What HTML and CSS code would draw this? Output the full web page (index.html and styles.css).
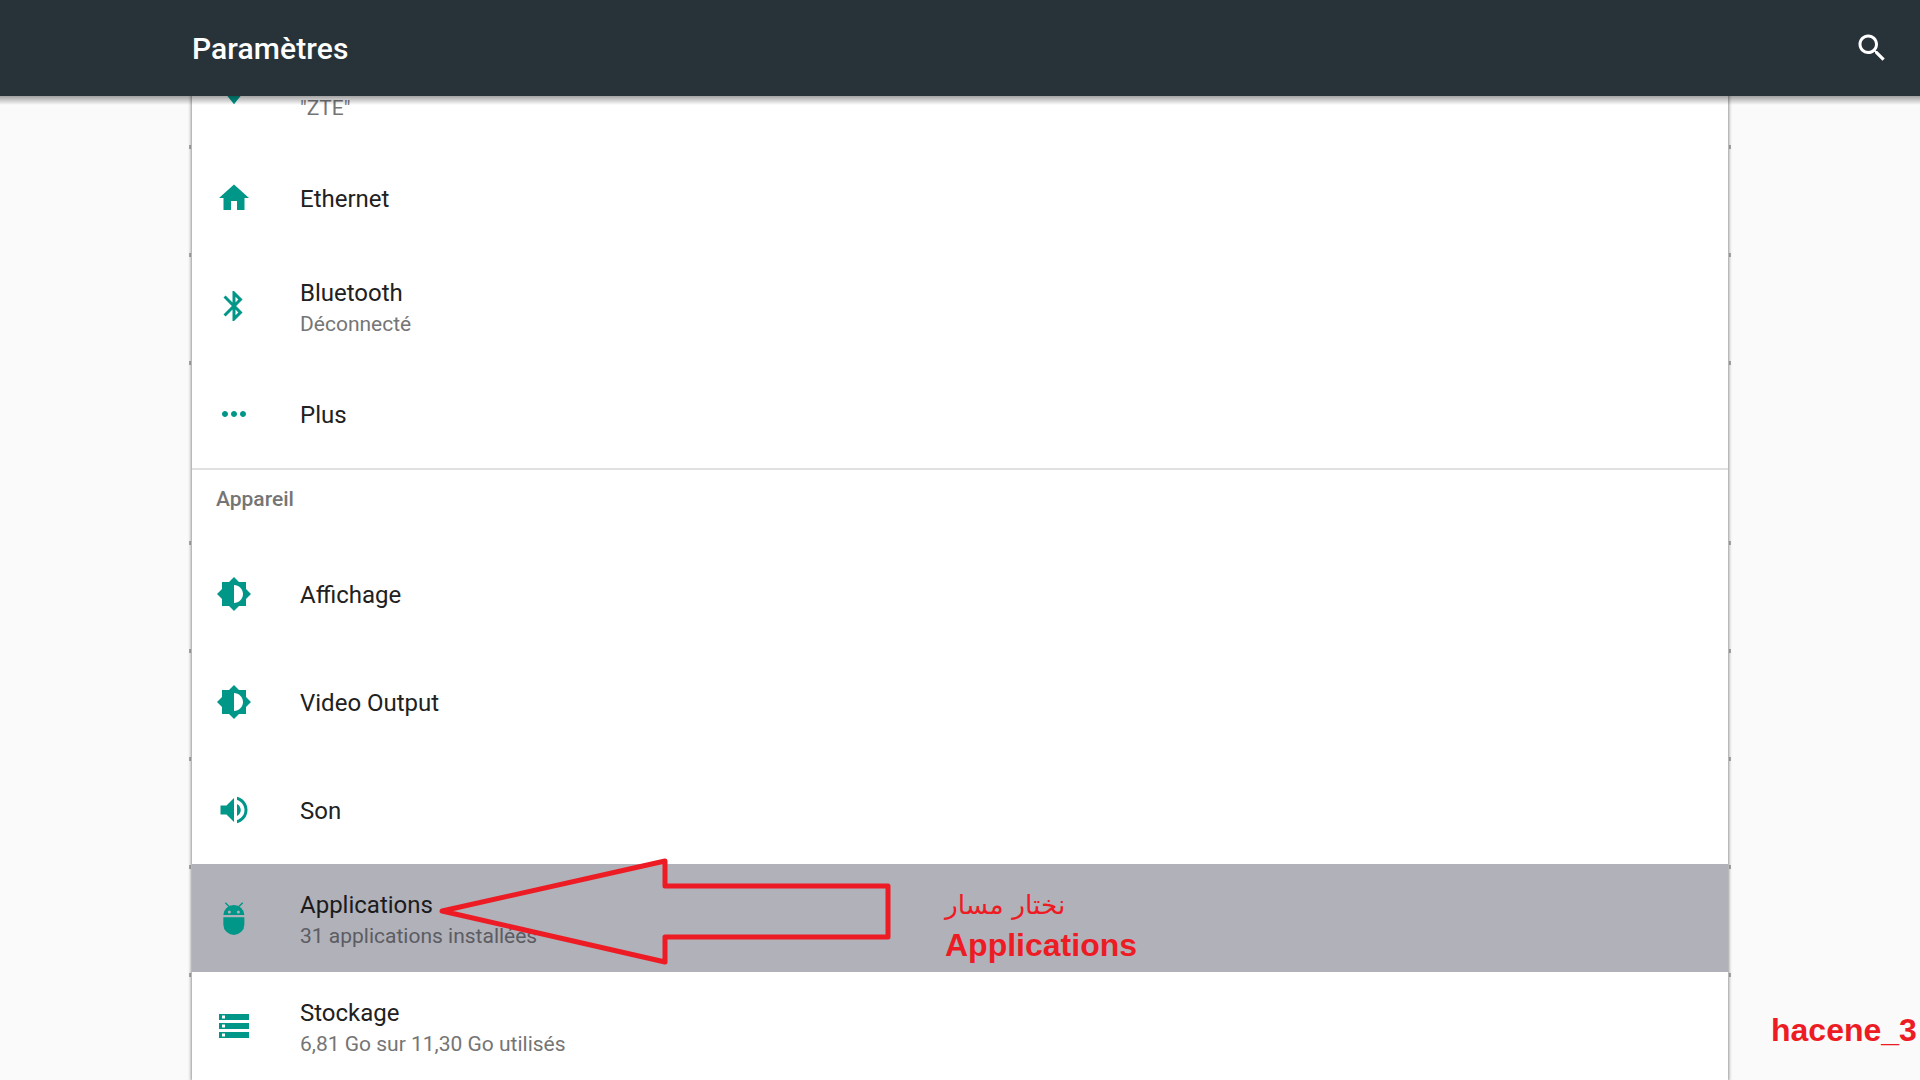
FILE: index.html
```html
<!DOCTYPE html>
<html lang="fr">
<head>
<meta charset="utf-8">
<title>Paramètres</title>
<link rel="stylesheet" href="styles.css">
</head>
<body>
<header class="appbar">
  <h1 class="appbar-title">Paramètres</h1>
  <svg class="search-icon" viewBox="0 0 24 24"><path d="M15.5 14h-.79l-.28-.27C15.41 12.59 16 11.11 16 9.5 16 5.91 13.09 3 9.5 3S3 5.91 3 9.5 5.91 16 9.5 16c1.61 0 3.09-.59 4.23-1.57l.27.28v.79l5 4.99L20.49 19l-4.99-5zm-6 0C7.01 14 5 11.99 5 9.5S7.01 5 9.5 5 14 7.01 14 9.5 11.99 14 9.5 14z"/></svg>
</header>
<main class="panel">
  <div class="row">
    <svg class="icon" viewBox="0 0 24 24"><path d="M12.01 21.49L23.64 7c-.45-.34-4.93-4-11.64-4C5.28 3 .81 6.66.36 7l11.64 14.49z"/></svg>
    <div class="text"><div class="title">Wi-Fi</div><div class="summary">"ZTE"</div></div>
  </div>
  <div class="row">
    <svg class="icon" viewBox="0 0 24 24"><path d="M10 20v-6h4v6h5v-8h3L12 3 2 12h3v8z"/></svg>
    <div class="text"><div class="title">Ethernet</div></div>
  </div>
  <div class="row">
    <svg class="icon" viewBox="0 0 24 24"><path d="M17.71 7.71L12 2h-1v7.59L6.41 5 5 6.41 10.59 12 5 17.59 6.41 19 11 14.41V22h1l5.71-5.71-4.3-4.29 4.3-4.29zM13 5.83l1.88 1.88L13 9.59V5.83zm1.88 10.46L13 18.17v-3.76l1.88 1.88z"/></svg>
    <div class="text"><div class="title">Bluetooth</div><div class="summary">Déconnecté</div></div>
  </div>
  <div class="row">
    <svg class="icon" viewBox="0 0 24 24"><path d="M6 10c-1.1 0-2 .9-2 2s.9 2 2 2 2-.9 2-2-.9-2-2-2zm12 0c-1.1 0-2 .9-2 2s.9 2 2 2 2-.9 2-2-.9-2-2-2zm-6 0c-1.1 0-2 .9-2 2s.9 2 2 2 2-.9 2-2-.9-2-2-2z"/></svg>
    <div class="text"><div class="title">Plus</div></div>
  </div>
  <div class="section-head">Appareil</div>
  <div class="row">
    <svg class="icon" viewBox="0 0 24 24"><path d="M20 15.31L23.31 12 20 8.69V4h-4.69L12 .69 8.69 4H4v4.69L.69 12 4 15.31V20h4.69L12 23.31 15.31 20H20v-4.69zM12 18V6c3.31 0 6 2.69 6 6s-2.69 6-6 6z"/></svg>
    <div class="text"><div class="title">Affichage</div></div>
  </div>
  <div class="row">
    <svg class="icon" viewBox="0 0 24 24"><path d="M20 15.31L23.31 12 20 8.69V4h-4.69L12 .69 8.69 4H4v4.69L.69 12 4 15.31V20h4.69L12 23.31 15.31 20H20v-4.69zM12 18V6c3.31 0 6 2.69 6 6s-2.69 6-6 6z"/></svg>
    <div class="text"><div class="title">Video Output</div></div>
  </div>
  <div class="row">
    <svg class="icon" viewBox="0 0 24 24"><path d="M3 9v6h4l5 5V4L7 9H3zm13.5 3c0-1.77-1.02-3.29-2.5-4.03v8.05c1.48-.73 2.5-2.25 2.5-4.02zM14 3.23v2.06c2.89.86 5 3.54 5 6.71s-2.11 5.85-5 6.71v2.06c4.01-.91 7-4.49 7-8.77s-2.99-7.86-7-8.77z"/></svg>
    <div class="text"><div class="title">Son</div></div>
  </div>
  <div class="row row-active">
    <svg class="icon" viewBox="0 0 24 24">
      <path class="antenna" d="M6.2 1.8L8.9 4.5M17.8 1.8L15.1 4.5"/>
      <path fill-rule="evenodd" d="M4.9 10a7 6.7 0 0 1 14 0zM8.9 7a1 1 0 1 0 0 2 1 1 0 0 0 0-2zM14.9 7a1 1 0 1 0 0 2 1 1 0 0 0 0-2z"/>
      <path d="M4.9 11.5h14v4.8a7 7 0 0 1-14 0z"/>
    </svg>
    <div class="text"><div class="title">Applications</div><div class="summary">31 applications installées</div></div>
  </div>
  <div class="row">
    <svg class="icon" viewBox="0 0 24 24"><path d="M2 20h20v-4H2v4zm2-3h2v2H4v-2zM2 4v4h20V4H2zm4 3H4V5h2v2zm-4 7h20v-4H2v4zm2-3h2v2H4v-2z"/></svg>
    <div class="text"><div class="title">Stockage</div><div class="summary">6,81 Go sur 11,30 Go utilisés</div></div>
  </div>
</main>
<svg class="arrow" viewBox="0 0 1920 1080"><polygon points="442,911 665,861 665,886 888,886 888,937 665,937 665,962"/></svg>
<div class="note-ar" dir="rtl" lang="ar">نختار مسار</div>
<div class="note-en">Applications</div>
<div class="credit">hacene_3</div>
</body>
</html>
```

FILE: styles.css
```css
* { box-sizing: border-box; }
html, body { margin: 0; height: 1080px; }
body {
  position: relative;
  overflow: hidden;
  background: #fafafa;
  font-family: Roboto, "Liberation Sans", sans-serif;
}
.appbar {
  position: relative;
  z-index: 2;
  height: 96px;
  display: flex;
  align-items: center;
  justify-content: space-between;
  padding: 0 30px 0 192px;
  background: #283339;
}
.appbar::after {
  content: "";
  position: absolute;
  left: 0;
  right: 0;
  top: 100%;
  height: 9px;
  background: linear-gradient(rgba(0, 0, 0, .36), rgba(0, 0, 0, 0));
}
.appbar-title {
  margin: 0;
  font-size: 30px;
  font-weight: 500;
  letter-spacing: .1px;
  color: #fff;
}
.search-icon { width: 36px; height: 36px; fill: #fff; }
.panel {
  margin: -60px 192px 0;
  background: #fff;
  box-shadow: 0 0 3px 1px rgba(0, 0, 0, .42);
}
.row {
  position: relative;
  height: 108px;
  display: flex;
  align-items: center;
  gap: 48px;
  padding-left: 24px;
}
.row::before, .row::after {
  content: "";
  position: absolute;
  top: 1px;
  width: 2px;
  height: 4px;
  background: rgba(0, 0, 0, .3);
}
.row::before { left: -3px; }
.row::after { right: -3px; }
.icon { width: 36px; height: 36px; flex: none; fill: #009688; }
.antenna { fill: none; stroke: #009688; stroke-width: .9; }
.text { padding-top: 3px; }
.title { font-size: 24px; line-height: 32px; color: #212121; }
.title:only-child { margin-top: -2px; }
.summary { margin-top: 1px; font-size: 21px; line-height: 28px; color: #757575; }
.row-active { background: #b0b1b9; }
.row-active .title { color: #1b1b1d; }
.row-active .summary { color: #5c5c62; }
.section-head {
  height: 72px;
  padding: 15px 0 0 24px;
  border-top: 2px solid #e0e0e0;
  font-size: 21px;
  font-weight: 500;
  line-height: 28px;
  color: #757575;
}
.arrow {
  position: absolute;
  inset: 0;
  width: 1920px;
  height: 1080px;
  fill: none;
  stroke: #ed1c24;
  stroke-width: 5;
  stroke-linejoin: round;
}
.note-ar, .note-en, .credit {
  position: absolute;
  color: #ed1c24;
  white-space: nowrap;
}
.note-ar {
  left: 945px;
  top: 886px;
  font: 26.5px/38px "DejaVu Sans", sans-serif;
}
.note-en {
  left: 945px;
  top: 927px;
  font: bold 32px/37px "Liberation Sans", sans-serif;
}
.credit {
  left: 1771px;
  top: 1012px;
  font: bold 32px/37px "Liberation Sans", sans-serif;
}
```
